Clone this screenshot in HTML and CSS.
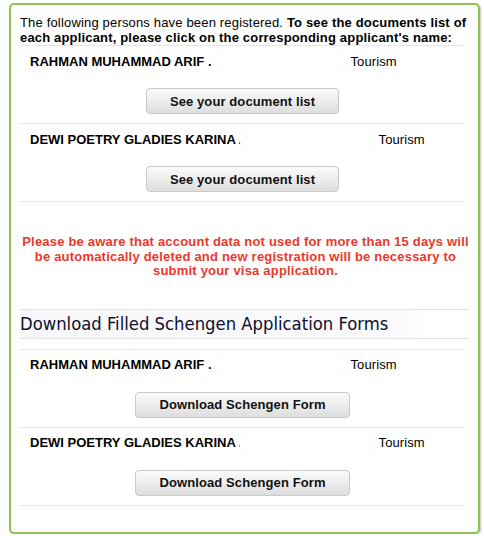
FILE: index.html
```html
<!DOCTYPE html>
<html>
<head>
<meta charset="utf-8">
<link rel="stylesheet" href="styles.css">
</head>
<body>
<div class="panel">
  <p class="intro">The following persons have been registered. <b>To see the documents list of each applicant, please click on the corresponding applicant's name:</b></p>
  <div class="row">
    <div class="name"><b>RAHMAN MUHAMMAD ARIF .</b><span class="blur"></span><span class="purpose">Tourism</span></div>
    <div class="actions"><button class="btn">See your document list</button></div>
  </div>
  <div class="row">
    <div class="name"><b>DEWI POETRY GLADIES KARINA /</b><span class="blur over"></span><span class="purpose">Tourism</span></div>
    <div class="actions"><button class="btn">See your document list</button></div>
  </div>
  <p class="warning">Please be aware that account data not used for more than 15 days will be automatically deleted and new registration will be necessary to submit your visa application.</p>
  <h2 class="heading">Download Filled Schengen Application Forms</h2>
  <div class="rows-top"></div>
  <div class="row">
    <div class="name"><b>RAHMAN MUHAMMAD ARIF .</b><span class="blur"></span><span class="purpose">Tourism</span></div>
    <div class="actions"><button class="btn">Download Schengen Form</button></div>
  </div>
  <div class="row">
    <div class="name"><b>DEWI POETRY GLADIES KARINA /</b><span class="blur over"></span><span class="purpose">Tourism</span></div>
    <div class="actions"><button class="btn">Download Schengen Form</button></div>
  </div>
</div>
</body>
</html>
```

FILE: styles.css
```css
html, body {
  margin: 0;
  padding: 0;
  background: #ffffff;
}
body {
  font-family: "Liberation Sans", Arial, sans-serif;
  color: #000;
}
.panel {
  box-sizing: border-box;
  margin: 3px 0 0 9px;
  width: 471px;
  height: 531px;
  border: 2px solid #8cc44f;
  border-radius: 5px;
  box-shadow: 1px 1px 2px rgba(0, 0, 0, 0.25);
  padding: 10px 13px 0 9px;
}
.intro {
  margin: 0 -7px 0 0;
  font-size: 13px;
  letter-spacing: 0.17px;
  line-height: 15px;
}
.intro::after {
  content: "";
  display: block;
  margin-right: 7px;
  border-bottom: 1px solid #e6e6e6;
}
.row {
  border-bottom: 1px solid #e6e6e6;
  padding: 5px 0 9px;
}
.name {
  display: flex;
  align-items: center;
  height: 20px;
  padding-left: 10px;
  font-size: 13px;
  white-space: nowrap;
}
.name b {
  font-weight: bold;
}
.blur {
  display: inline-block;
  flex: none;
  width: 134px;
  height: 20px;
  border-radius: 10px;
  background: #ffffff;
  box-shadow: 0 0 2px rgba(0, 0, 0, 0.07);
  margin-left: 2px;
}
.blur.over {
  width: 137px;
  margin-left: -4px;
}
.purpose {
  margin-left: 3px;
  font-size: 13px;
  letter-spacing: 0.1px;
}
.actions {
  display: flex;
  justify-content: center;
  padding-top: 17px;
}
.btn {
  height: 26px;
  padding: 0 23px;
  border: 1px solid #c9c9c9;
  border-radius: 4px;
  background: linear-gradient(#fbfbfb, #dedede);
  font-family: "Liberation Sans", Arial, sans-serif;
  font-weight: bold;
  font-size: 13px;
  letter-spacing: 0.1px;
  color: #111;
}
.warning {
  margin: 0 -6px 0 0;
  padding: 33px 0 30px;
  text-align: center;
  color: #e8392b;
  font-weight: bold;
  font-size: 13px;
  letter-spacing: 0.2px;
  line-height: 14.5px;
}
.heading {
  margin: 0 -4px 0 0;
  height: 28px;
  line-height: 28px;
  border-top: 1px solid #e2e2f0;
  border-bottom: 1px solid #e2e2f0;
  background: linear-gradient(90deg, #f8f8fb 0%, #fafafc 85%, #ffffff 90%);
  font-family: "DejaVu Sans Condensed", "DejaVu Sans", sans-serif;
  font-weight: normal;
  font-size: 18.3px;
  color: #0f0f2e;
}
.rows-top {
  margin-top: 10px;
  border-bottom: 1px solid #e6e6e6;
}
```
